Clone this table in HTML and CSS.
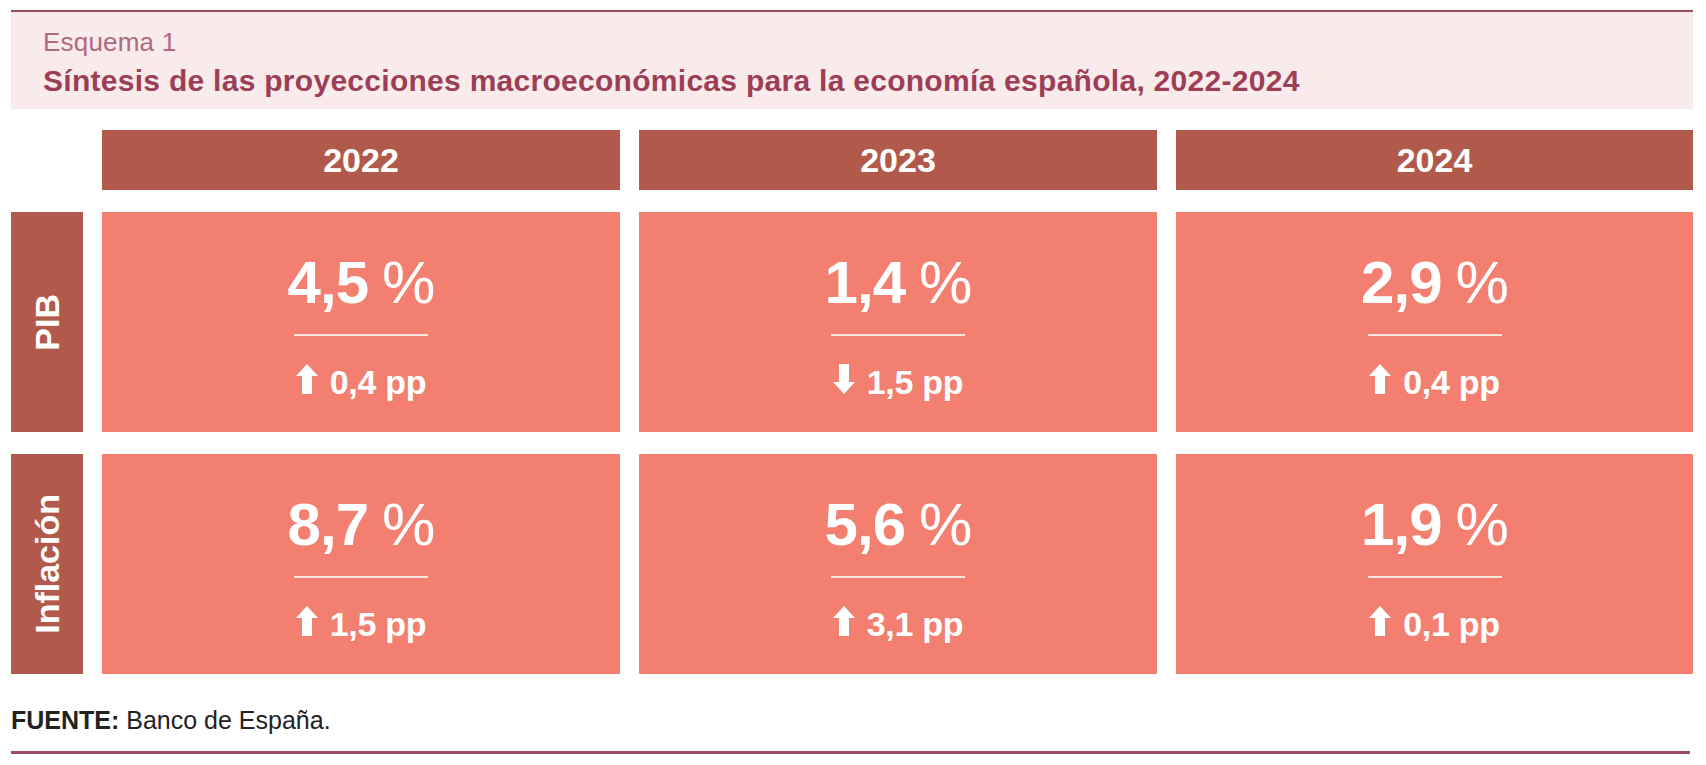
FILE: index.html
```html
<!DOCTYPE html>
<html lang="es">
<head>
<meta charset="utf-8">
<title>Esquema 1</title>
<link rel="stylesheet" href="styles.css">
</head>
<body>
<div class="page">
  <header class="head">
    <div class="kicker">Esquema 1</div>
    <h1 class="title">Síntesis de las proyecciones macroeconómicas para la economía española, 2022-2024</h1>
  </header>

  <div class="grid">
    <div class="corner"></div>
    <div class="year">2022</div>
    <div class="year">2023</div>
    <div class="year">2024</div>

    <div class="label"><span>PIB</span></div>
    <div class="cell">
      <div class="value">4,5<span class="pct">%</span></div>
      <div class="rule"></div>
      <div class="change"><svg class="arrow" viewBox="0 0 22 30"><polygon points="11,0 22,12 16,12 16,30 6,30 6,12 0,12"/></svg><span>0,4 pp</span></div>
    </div>
    <div class="cell">
      <div class="value">1,4<span class="pct">%</span></div>
      <div class="rule"></div>
      <div class="change"><svg class="arrow" viewBox="0 0 22 30"><polygon points="11,30 22,18 16,18 16,0 6,0 6,18 0,18"/></svg><span>1,5 pp</span></div>
    </div>
    <div class="cell">
      <div class="value">2,9<span class="pct">%</span></div>
      <div class="rule"></div>
      <div class="change"><svg class="arrow" viewBox="0 0 22 30"><polygon points="11,0 22,12 16,12 16,30 6,30 6,12 0,12"/></svg><span>0,4 pp</span></div>
    </div>

    <div class="label"><span>Inflación</span></div>
    <div class="cell">
      <div class="value">8,7<span class="pct">%</span></div>
      <div class="rule"></div>
      <div class="change"><svg class="arrow" viewBox="0 0 22 30"><polygon points="11,0 22,12 16,12 16,30 6,30 6,12 0,12"/></svg><span>1,5 pp</span></div>
    </div>
    <div class="cell">
      <div class="value">5,6<span class="pct">%</span></div>
      <div class="rule"></div>
      <div class="change"><svg class="arrow" viewBox="0 0 22 30"><polygon points="11,0 22,12 16,12 16,30 6,30 6,12 0,12"/></svg><span>3,1 pp</span></div>
    </div>
    <div class="cell">
      <div class="value">1,9<span class="pct">%</span></div>
      <div class="rule"></div>
      <div class="change"><svg class="arrow" viewBox="0 0 22 30"><polygon points="11,0 22,12 16,12 16,30 6,30 6,12 0,12"/></svg><span>0,1 pp</span></div>
    </div>
  </div>

  <p class="source"><b>FUENTE:</b> Banco de España.</p>
</div>
</body>
</html>
```

FILE: styles.css
```css
* { box-sizing: border-box; }

html, body {
  margin: 0;
  padding: 0;
  background: #ffffff;
}

body {
  font-family: "Liberation Sans", Arial, Helvetica, sans-serif;
}

.page {
  width: 1693px;
  padding: 10px 0 0 11px;
}

.head {
  border-top: 2px solid #9e4c62;
  background: #f9ebeb;
  height: 99px;
  padding: 15px 0 0 32px;
}

.kicker {
  font-size: 26px;
  line-height: 30px;
  color: #ad6a80;
  font-weight: 400;
  letter-spacing: 0.2px;
}

.title {
  margin: 7px 0 0 0;
  font-size: 30px;
  line-height: 34px;
  font-weight: 700;
  color: #9c3f56;
  letter-spacing: 0.28px;
}

.grid {
  margin-top: 21px;
  display: grid;
  grid-template-columns: 72px 518px 518px 517px;
  grid-template-rows: 60px 220px 220px;
  column-gap: 19px;
  row-gap: 22px;
}

.year {
  background: #b15a4b;
  color: #ffffff;
  font-weight: 700;
  font-size: 34px;
  display: flex;
  align-items: center;
  justify-content: center;
}

.label {
  background: #b15a4b;
  color: #ffffff;
  font-weight: 700;
  font-size: 34px;
  display: flex;
  align-items: center;
  justify-content: center;
}

.label span {
  writing-mode: vertical-rl;
  transform: rotate(180deg);
  line-height: 1;
}

.cell {
  background: #f27f6f;
  color: #ffffff;
  display: flex;
  flex-direction: column;
  align-items: center;
  padding-top: 41px;
}

.value {
  font-size: 60px;
  line-height: 60px;
  font-weight: 700;
  letter-spacing: -1px;
}

.pct {
  font-weight: 400;
  margin-left: 14px;
}

.rule {
  width: 134px;
  height: 2px;
  background: #fbe3df;
  margin-top: 21px;
}

.change {
  margin-top: 28px;
  display: flex;
  align-items: flex-end;
  font-size: 34px;
  line-height: 30px;
  font-weight: 700;
  letter-spacing: -0.3px;
}

.arrow {
  width: 22px;
  height: 30px;
  fill: #ffffff;
  margin-right: 12px;
  margin-bottom: 3px;
}

.source {
  margin: 32px 0 0 0;
  font-size: 25px;
  line-height: 28px;
  color: #222222;
  padding-bottom: 17px;
  border-bottom: 3px solid #9e4c62;
  width: 1679px;
}
```
